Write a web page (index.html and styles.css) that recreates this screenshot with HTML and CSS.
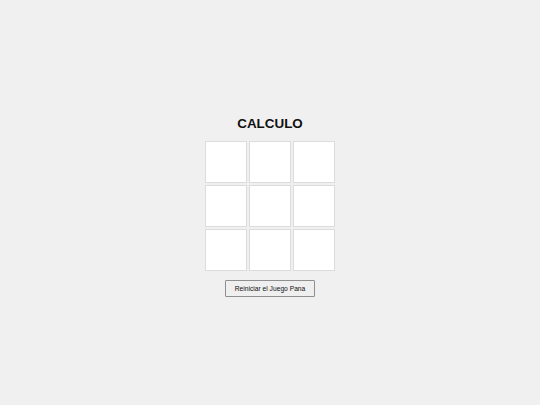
FILE: index.html
```html
<!DOCTYPE html>
<html lang="es">
<head>
<meta charset="utf-8">
<title>Calculo</title>
<link rel="stylesheet" href="styles.css">
</head>
<body>
<main class="game">
  <h1 class="title">CALCULO</h1>
  <div class="board">
    <div class="cell"></div>
    <div class="cell"></div>
    <div class="cell"></div>
    <div class="cell"></div>
    <div class="cell"></div>
    <div class="cell"></div>
    <div class="cell"></div>
    <div class="cell"></div>
    <div class="cell"></div>
  </div>
  <button class="reset" type="button">Reiniciar el Juego Pana</button>
</main>
</body>
</html>
```

FILE: styles.css
```css
html, body {
  margin: 0;
  padding: 0;
  background: #f0f0f0;
  font-family: "Liberation Sans", Arial, sans-serif;
}

.game {
  display: flex;
  flex-direction: column;
  align-items: center;
  padding-top: 116px;
}

.title {
  margin: 0 0 9px;
  font-size: 13.4px;
  font-weight: bold;
  color: #111;
  line-height: 16px;
}

.board {
  display: grid;
  grid-template-columns: repeat(3, 42px);
  grid-auto-rows: 42px;
  gap: 2px;
}

.cell {
  box-sizing: border-box;
  background: #ffffff;
  border: 1px solid #dcdcdc;
}

.reset {
  margin-top: 9px;
  box-sizing: border-box;
  width: 90px;
  height: 17px;
  padding: 0;
  font-family: "Liberation Sans", Arial, sans-serif;
  font-size: 6.7px;
  color: #111;
  background: #efefef;
  border: 1px solid #8f8f8f;
  border-radius: 1px;
}
```
